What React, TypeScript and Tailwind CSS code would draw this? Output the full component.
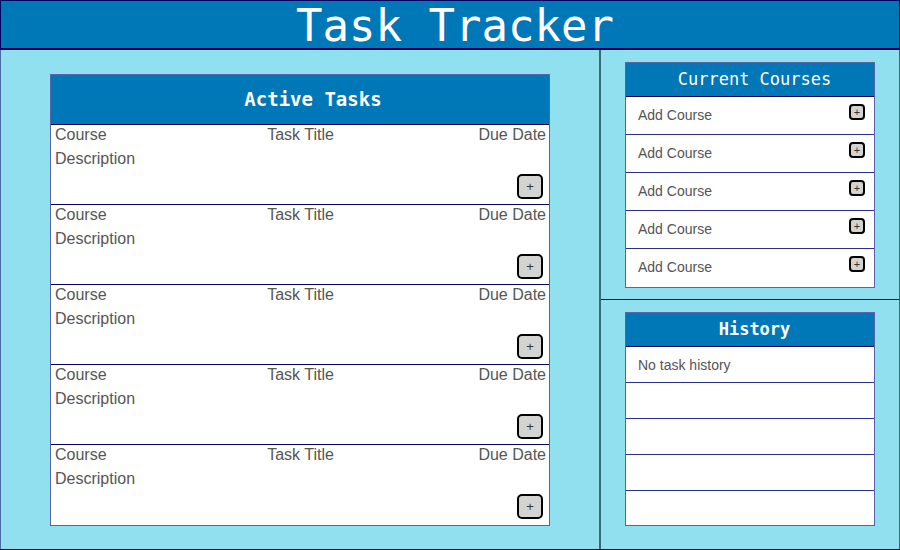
const mono = { fontFamily: '"DejaVu Sans Mono", "Liberation Mono", monospace' };

function PlusButton({ small }: { small?: boolean }) {
  if (small) {
    return (
      <button className="flex h-[16px] w-[16px] items-center justify-center rounded-[4px] border-2 border-black bg-[#d3d3d3] text-[11px] leading-none text-[#333]">
        +
      </button>
    );
  }
  return (
    <button className="flex h-[25px] w-[26px] items-center justify-center rounded-[5px] border-2 border-black bg-[#d3d3d3] text-[13px] leading-none text-[#333]">
      +
    </button>
  );
}

function TaskRow() {
  return (
    <div className="h-[80px] border-b border-[#03045e] pl-[4px] pr-[3px] text-[16px] text-[#555] last:border-b-0">
      <div className="grid grid-cols-3 leading-[20px]">
        <span>Course</span>
        <span className="text-center">Task Title</span>
        <span className="text-right">Due Date</span>
      </div>
      <div className="mt-[4px] leading-[20px]">Description</div>
      <div className="mt-[5px] flex justify-end pr-[3px]">
        <PlusButton />
      </div>
    </div>
  );
}

function CourseRow() {
  return (
    <div className="flex h-[38px] items-start justify-between border-b border-[#2a2f8a] pl-[12px] pr-[9px] text-[14px] text-[#555] last:border-b-0">
      <span className="mt-[9px] leading-[18px]">Add Course</span>
      <span className="mt-[7px]">
        <PlusButton small />
      </span>
    </div>
  );
}

export default function App() {
  const courseRows = [0, 1, 2, 3, 4];
  const taskRows = [0, 1, 2, 3, 4];
  return (
    <div
      className="flex h-[550px] w-[900px] flex-col overflow-hidden bg-[#90e0ef]"
      style={{ fontFamily: '"Liberation Sans", Arial, sans-serif' }}
    >
      <header className="flex h-[50px] items-center justify-center border border-b-2 border-[#03045e] bg-[#0077b6] pl-[10px]">
        <h1 className="pt-[3px] text-[44px] leading-[50px] text-white" style={mono}>
          Task Tracker
        </h1>
      </header>

      <div className="flex h-[500px] border-b border-[#03045e]">
        <section className="w-[599px] border-l border-[#4a6aa8] pl-[49px] pt-[24px]">
          <div className="w-[500px] border border-[#5d62a8] bg-white">
            <div className="flex h-[50px] items-center justify-center border-b border-[#03045e] bg-[#0077b6] pl-[26px]">
              <h2 className="text-[19px] font-bold text-white" style={mono}>
                Active Tasks
              </h2>
            </div>
            {taskRows.map((i) => (
              <TaskRow key={i} />
            ))}
          </div>
        </section>

        <aside className="flex w-[301px] flex-col border-x border-l-2 border-l-[#3b6878] border-r-[#3b6878]">
          <div className="h-[250px] border-b border-[#03045e] pl-[24px] pt-[12px]">
            <div className="w-[250px] border border-[#5d62a8] bg-white">
              <div className="flex h-[34px] items-center justify-center border-b border-[#03045e] bg-[#0077b6] pl-[9px]">
                <h3 className="text-[17px] text-white" style={mono}>
                  Current Courses
                </h3>
              </div>
              {courseRows.map((i) => (
                <CourseRow key={i} />
              ))}
            </div>
          </div>
          <div className="flex-1 pl-[24px] pt-[12px]">
            <div className="w-[250px] border border-[#5d62a8] bg-white">
              <div className="flex h-[34px] items-center justify-center border-b border-[#03045e] bg-[#0077b6] pl-[9px]">
                <h3 className="text-[17px] font-bold text-white" style={mono}>
                  History
                </h3>
              </div>
              <div className="flex h-[36px] items-center border-b border-[#2a2f8a] pl-[12px] pt-[1px] text-[14px] text-[#555]">
                No task history
              </div>
              <div className="h-[36px] border-b border-[#2a2f8a]" />
              <div className="h-[36px] border-b border-[#2a2f8a]" />
              <div className="h-[36px] border-b border-[#2a2f8a]" />
              <div className="h-[34px]" />
            </div>
          </div>
        </aside>
      </div>
    </div>
  );
}
